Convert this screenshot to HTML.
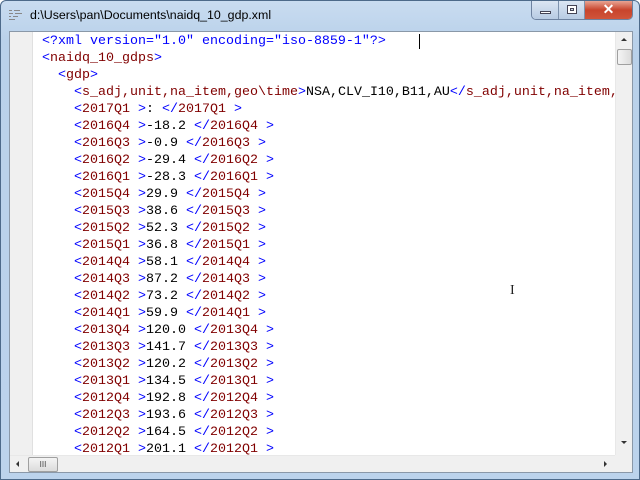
<!DOCTYPE html>
<html><head><style>
*{margin:0;padding:0;box-sizing:border-box}
body{width:640px;height:480px;overflow:hidden;background:#fff;font-family:"Liberation Sans",sans-serif}
.win{position:absolute;left:0;top:0;width:640px;height:480px;background:linear-gradient(#c9dcf0,#b9d1ea 40px,#bcd3ec);border:1px solid #4d6a8a;border-radius:6px 6px 0 0}
.title{position:absolute;left:29px;top:7px;font-size:12.4px;color:#000}
.client{position:absolute;left:8px;top:30px;width:624px;height:442px;background:#fff;border:1px solid #8a98a8;overflow:hidden}
.gut{position:absolute;left:0;top:0;width:23px;height:424px;background:#f0f0f0;border-right:1px solid #e0e0e0}
.code{position:absolute;left:32px;top:1px;font-family:"Liberation Mono",monospace;font-size:13.33px;line-height:17px;white-space:pre;color:#000}
.b{color:#0000ff}.t{color:#800000}
.vs{position:absolute;left:605px;top:0;width:17px;height:424px;background:#f0f0f0;border-left:1px solid #e8e8e8}
.hs{position:absolute;left:0;top:423px;width:605px;height:17px;background:#f0f0f0;border-top:1px solid #e8e8e8}
.corner{position:absolute;left:605px;top:423px;width:17px;height:17px;background:#f0f0f0}
.thumbv{position:absolute;left:1px;top:17px;width:15px;height:16px;background:linear-gradient(90deg,#f4f4f4,#dcdcdc);border:1px solid #a0a0a0;border-radius:2px}
.thumbh{position:absolute;left:18px;top:1px;width:30px;height:15px;background:linear-gradient(#f4f4f4,#dcdcdc);border:1px solid #a0a0a0;border-radius:2px;font-size:8px;text-align:center;line-height:13px;color:#444}
.btns{position:absolute;left:530px;top:0;height:19px;display:flex;border:1px solid #6d82a0;border-top:none;border-radius:0 0 5px 5px;overflow:hidden}
.btns div{height:18px;background:linear-gradient(#dbe6f3,#b7cbe3);border-right:1px solid #7d92ad;position:relative}
</style></head><body>
<div class="win">
<svg style="position:absolute;left:7px;top:7px" width="16" height="14"><g fill="#888"><rect x="1" y="2" width="3" height="1"/><rect x="6" y="2" width="6" height="1"/><rect x="1" y="5" width="4" height="1"/><rect x="7" y="5" width="7" height="1"/><rect x="1" y="8" width="2" height="1"/><rect x="5" y="8" width="5" height="1"/><rect x="1" y="11" width="6" height="1"/></g></svg>
<div class="title">d:\Users\pan\Documents\naidq_10_gdp.xml</div>
<div class="btns">
<div style="width:27px"><div style="position:absolute;left:8px;top:10px;width:11px;height:3px;background:#fff;border:1px solid #445"></div></div>
<div style="width:26px"><div style="position:absolute;left:8px;top:4px;width:10px;height:9px;border:1px solid #445;background:#fff"><div style="margin:2px;height:3px;border:1px solid #445;background:#cfd9e6"></div></div></div>
<div style="width:47px;background:linear-gradient(#e8a493,#c8442c 50%,#d0553a);border-right:none;color:#fff;font-weight:bold;font-size:14px;text-align:center;line-height:17px">✕</div>
</div>
<div class="client">
<div class="gut"></div>
<div class="code"><span class="b">&lt;?xml version="1.0" encoding="iso-8859-1"?&gt;</span>
<span class="b">&lt;</span><span class="t">naidq_10_gdps</span><span class="b">&gt;</span>
  <span class="b">&lt;</span><span class="t">gdp</span><span class="b">&gt;</span>
    <span class="b">&lt;</span><span class="t">s_adj,unit,na_item,geo\time</span><span class="b">&gt;</span>NSA,CLV_I10,B11,AU<span class="b">&lt;/</span><span class="t">s_adj,unit,na_item,</span>
    <span class="b">&lt;</span><span class="t">2017Q1 </span><span class="b">&gt;</span>: <span class="b">&lt;/</span><span class="t">2017Q1 </span><span class="b">&gt;</span>
    <span class="b">&lt;</span><span class="t">2016Q4 </span><span class="b">&gt;</span>-18.2 <span class="b">&lt;/</span><span class="t">2016Q4 </span><span class="b">&gt;</span>
    <span class="b">&lt;</span><span class="t">2016Q3 </span><span class="b">&gt;</span>-0.9 <span class="b">&lt;/</span><span class="t">2016Q3 </span><span class="b">&gt;</span>
    <span class="b">&lt;</span><span class="t">2016Q2 </span><span class="b">&gt;</span>-29.4 <span class="b">&lt;/</span><span class="t">2016Q2 </span><span class="b">&gt;</span>
    <span class="b">&lt;</span><span class="t">2016Q1 </span><span class="b">&gt;</span>-28.3 <span class="b">&lt;/</span><span class="t">2016Q1 </span><span class="b">&gt;</span>
    <span class="b">&lt;</span><span class="t">2015Q4 </span><span class="b">&gt;</span>29.9 <span class="b">&lt;/</span><span class="t">2015Q4 </span><span class="b">&gt;</span>
    <span class="b">&lt;</span><span class="t">2015Q3 </span><span class="b">&gt;</span>38.6 <span class="b">&lt;/</span><span class="t">2015Q3 </span><span class="b">&gt;</span>
    <span class="b">&lt;</span><span class="t">2015Q2 </span><span class="b">&gt;</span>52.3 <span class="b">&lt;/</span><span class="t">2015Q2 </span><span class="b">&gt;</span>
    <span class="b">&lt;</span><span class="t">2015Q1 </span><span class="b">&gt;</span>36.8 <span class="b">&lt;/</span><span class="t">2015Q1 </span><span class="b">&gt;</span>
    <span class="b">&lt;</span><span class="t">2014Q4 </span><span class="b">&gt;</span>58.1 <span class="b">&lt;/</span><span class="t">2014Q4 </span><span class="b">&gt;</span>
    <span class="b">&lt;</span><span class="t">2014Q3 </span><span class="b">&gt;</span>87.2 <span class="b">&lt;/</span><span class="t">2014Q3 </span><span class="b">&gt;</span>
    <span class="b">&lt;</span><span class="t">2014Q2 </span><span class="b">&gt;</span>73.2 <span class="b">&lt;/</span><span class="t">2014Q2 </span><span class="b">&gt;</span>
    <span class="b">&lt;</span><span class="t">2014Q1 </span><span class="b">&gt;</span>59.9 <span class="b">&lt;/</span><span class="t">2014Q1 </span><span class="b">&gt;</span>
    <span class="b">&lt;</span><span class="t">2013Q4 </span><span class="b">&gt;</span>120.0 <span class="b">&lt;/</span><span class="t">2013Q4 </span><span class="b">&gt;</span>
    <span class="b">&lt;</span><span class="t">2013Q3 </span><span class="b">&gt;</span>141.7 <span class="b">&lt;/</span><span class="t">2013Q3 </span><span class="b">&gt;</span>
    <span class="b">&lt;</span><span class="t">2013Q2 </span><span class="b">&gt;</span>120.2 <span class="b">&lt;/</span><span class="t">2013Q2 </span><span class="b">&gt;</span>
    <span class="b">&lt;</span><span class="t">2013Q1 </span><span class="b">&gt;</span>134.5 <span class="b">&lt;/</span><span class="t">2013Q1 </span><span class="b">&gt;</span>
    <span class="b">&lt;</span><span class="t">2012Q4 </span><span class="b">&gt;</span>192.8 <span class="b">&lt;/</span><span class="t">2012Q4 </span><span class="b">&gt;</span>
    <span class="b">&lt;</span><span class="t">2012Q3 </span><span class="b">&gt;</span>193.6 <span class="b">&lt;/</span><span class="t">2012Q3 </span><span class="b">&gt;</span>
    <span class="b">&lt;</span><span class="t">2012Q2 </span><span class="b">&gt;</span>164.5 <span class="b">&lt;/</span><span class="t">2012Q2 </span><span class="b">&gt;</span>
    <span class="b">&lt;</span><span class="t">2012Q1 </span><span class="b">&gt;</span>201.1 <span class="b">&lt;/</span><span class="t">2012Q1 </span><span class="b">&gt;</span></div>
<div style="position:absolute;left:409px;top:2px;width:1px;height:15px;background:#000"></div>
<div style="position:absolute;left:500px;top:251px;font-size:14px;color:#222;font-family:'Liberation Serif',serif">I</div>
<div class="vs"><div style="position:absolute;left:5px;top:6px;border:3px solid transparent;border-bottom:3px solid #333;border-top:none;width:0"></div><div class="thumbv"></div><div style="position:absolute;left:5px;top:409px;border:3px solid transparent;border-top:3px solid #333;border-bottom:none;width:0"></div></div>
<div class="hs"><div style="position:absolute;left:6px;top:5px;border:3px solid transparent;border-right:3px solid #333;border-left:none;height:0"></div><div class="thumbh">III</div><div style="position:absolute;left:594px;top:5px;border:3px solid transparent;border-left:3px solid #333;border-right:none;height:0"></div></div>
<div class="corner"></div>
</div>
</div>
</body></html>
